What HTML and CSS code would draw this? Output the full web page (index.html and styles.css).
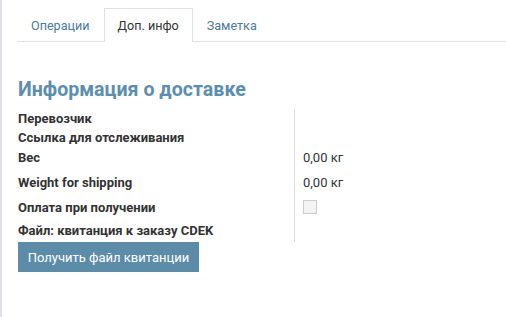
FILE: index.html
```html
<!DOCTYPE html>
<html lang="ru">
<head>
    <meta charset="UTF-8">
    <title>Доп. инфо</title>
    <link rel="stylesheet" href="styles.css">
</head>
<body>
<div class="sheet">
    <ul class="tabs">
        <li><a href="#">Операции</a></li>
        <li class="active"><a href="#">Доп. инфо</a></li>
        <li><a href="#">Заметка</a></li>
    </ul>
    <div class="tab-pane">
        <h2>Информация о доставке</h2>
        <div class="group">
            <div class="labels">
                <div class="row r1">Перевозчик</div>
                <div class="row r2">Ссылка для отслеживания</div>
                <div class="row r3">Вес</div>
                <div class="row r4">Weight for shipping</div>
                <div class="row r5">Оплата при получении</div>
                <div class="row r6">Файл: квитанция к заказу CDEK</div>
            </div>
            <div class="values">
                <div class="row r1"></div>
                <div class="row r2"></div>
                <div class="row r3">0,00 кг</div>
                <div class="row r4">0,00 кг</div>
                <div class="row r5"><span class="checkbox"></span></div>
                <div class="row r6"></div>
            </div>
        </div>
        <button class="btn">Получить файл квитанции</button>
    </div>
</div>
</body>
</html>
```

FILE: styles.css
```css
* {
    margin: 0;
    padding: 0;
    box-sizing: border-box;
}
body {
    font-family: Roboto, "Noto Sans", sans-serif;
    font-size: 13px;
    color: #333;
    background-color: #fff;
}
.sheet {
    min-height: 317px;
    border-left: 2px solid #dde1e6;
    padding-left: 15px;
    padding-top: 8px;
}
.tabs {
    list-style: none;
    display: flex;
    border-bottom: 1px solid #dee2e6;
    height: 34px;
    font-size: 12.6px;
}
.tabs li {
    height: 34px;
}
.tabs a {
    display: block;
    height: 34px;
    padding: 9px 13px 0;
    color: #4c7a9e;
    text-decoration: none;
    border: 1px solid transparent;
    border-bottom: none;
}
.tabs .active a {
    color: #333;
    background-color: #fff;
    border-color: #dee2e6;
    margin-bottom: -1px;
    position: relative;
}
.tab-pane {
    padding-top: 36px;
    padding-left: 1px;
}
h2 {
    font-size: 19.6px;
    font-weight: bold;
    color: #5e8eae;
    line-height: 24px;
    height: 31px;
}
.group {
    display: flex;
}
.labels {
    width: 276px;
    font-weight: bold;
    color: #333;
}
.values {
    border-left: 1px solid #dcdcdc;
    padding-left: 8px;
    color: #333;
}
.row {
    display: flex;
    align-items: center;
}
.r1 { height: 19px; }
.r2 { height: 19px; }
.r3 { height: 21px; }
.r4 { height: 28px; }
.r5 { height: 22px; }
.r6 { height: 24px; }
.checkbox {
    display: block;
    width: 14px;
    height: 14px;
    border: 1px solid #ccc;
    background-color: #f3f3f3;
}
.btn {
    display: block;
    width: 181px;
    height: 30px;
    background-color: #5d8ca9;
    color: #fff;
    border: none;
    font-family: Roboto, "Noto Sans", sans-serif;
    font-size: 13px;
    cursor: pointer;
}
```
